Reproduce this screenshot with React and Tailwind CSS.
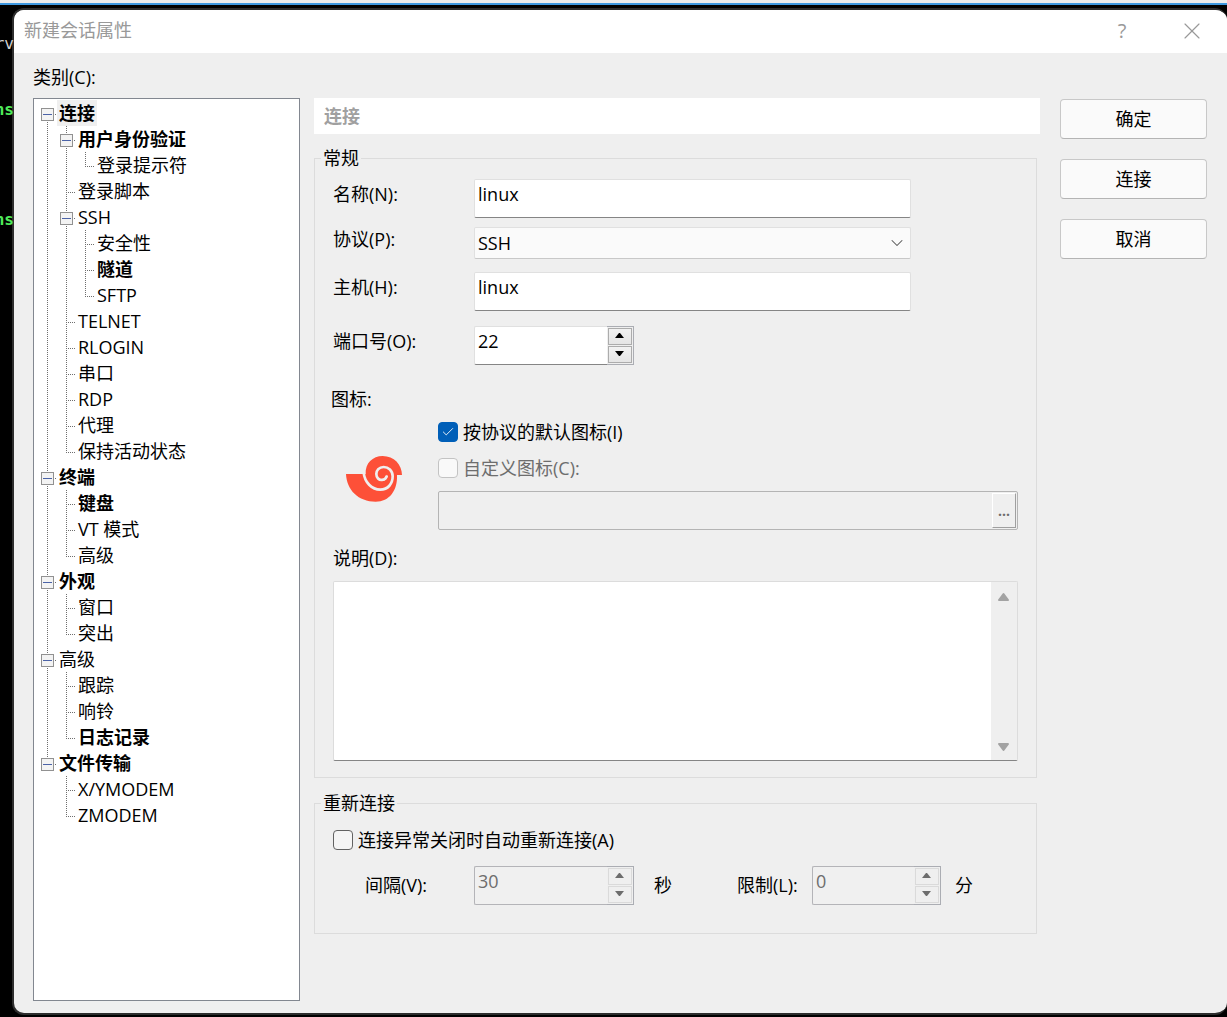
import { useState } from "react";
import { Check, ChevronDown, X } from "lucide-react";
import clsx from "clsx";

// ─── Data ────────────────────────────────────────────────────────────────────
const CATEGORIES = [
  {
    label: "连接",
    bold: true,
    selected: true,
    children: [
      { label: "用户身份验证", bold: true, children: [{ label: "登录提示符" }] },
      { label: "登录脚本" },
      {
        label: "SSH",
        children: [
          { label: "安全性" },
          { label: "隧道", bold: true },
          { label: "SFTP" },
        ],
      },
      { label: "TELNET" },
      { label: "RLOGIN" },
      { label: "串口" },
      { label: "RDP" },
      { label: "代理" },
      { label: "保持活动状态" },
    ],
  },
  {
    label: "终端",
    bold: true,
    children: [
      { label: "键盘", bold: true },
      { label: "VT 模式" },
      { label: "高级" },
    ],
  },
  {
    label: "外观",
    bold: true,
    children: [{ label: "窗口" }, { label: "突出" }],
  },
  {
    label: "高级",
    children: [
      { label: "跟踪" },
      { label: "响铃" },
      { label: "日志记录", bold: true },
    ],
  },
  {
    label: "文件传输",
    bold: true,
    children: [{ label: "X/YMODEM" }, { label: "ZMODEM" }],
  },
];

// ─── Tree ────────────────────────────────────────────────────────────────────
// One 19x26 cell of the dotted guide lines, with the +/- box where a node has children
function Guide({ up, down, across, box, open }) {
  return (
    <svg
      width="19"
      height="26"
      viewBox="0 0 19 26"
      shapeRendering="crispEdges"
      className="block shrink-0"
      aria-hidden="true"
    >
      <g stroke="#6e6e6e" strokeDasharray="1 1" fill="none">
        {up && <path d="M9.5 0V14" />}
        {down && <path d="M9.5 14V26" />}
        {across && <path d="M9 14.5H19" />}
      </g>
      {box && (
        <>
          <rect x="3.5" y="8.5" width="12" height="12" fill="#f3f3f3" stroke="#919191" />
          <path d="M5 14.5H14" stroke="#4b63a7" />
          {!open && <path d="M9.5 10V19" stroke="#4b63a7" />}
        </>
      )}
    </svg>
  );
}

function TreeNode({ node, trail, isFirst, isLast }) {
  const [open, setOpen] = useState(true);
  const isRoot = trail.length === 0;
  const guide = {
    up: !(isRoot && isFirst),
    down: !isLast,
    across: true,
  };

  return (
    <li role="treeitem" aria-expanded={node.children ? open : undefined}>
      <div className="flex h-[26px] items-center">
        {trail.map((line, i) => (
          <Guide key={i} up={line} down={line} />
        ))}
        {node.children ? (
          <button
            type="button"
            aria-label={node.label}
            onClick={() => setOpen(!open)}
          >
            <Guide {...guide} box open={open} />
          </button>
        ) : (
          <Guide {...guide} />
        )}
        <span
          className={clsx(
            "px-0.5 leading-[26px] whitespace-nowrap",
            node.bold && "font-bold",
            node.selected && "bg-[#efefef]",
          )}
        >
          {node.label}
        </span>
      </div>
      {node.children && open && (
        <ul role="group">
          {node.children.map((child, i) => (
            <TreeNode
              key={child.label}
              node={child}
              trail={[...trail, !isLast]}
              isFirst={i === 0}
              isLast={i === node.children.length - 1}
            />
          ))}
        </ul>
      )}
    </li>
  );
}

// ─── Form controls ───────────────────────────────────────────────────────────
function TextRow({ id, label, defaultValue }) {
  return (
    <div className="flex items-start">
      <label htmlFor={id} className="w-[141px] shrink-0 leading-[30px]">
        {label}
      </label>
      <input
        id={id}
        type="text"
        defaultValue={defaultValue}
        className="h-[39px] min-w-0 flex-1 rounded-xs border border-[#e0e0e0] border-b-[#858585] bg-white px-[3px] pb-2.5 outline-none"
      />
    </div>
  );
}

function Arrow({ down }) {
  return (
    <svg width="9" height="5" viewBox="0 0 9 5" fill="currentColor" aria-hidden="true">
      {down ? <path d="M0 0H9L5 5H4Z" /> : <path d="M0 5H9L5 0H4Z" />}
    </svg>
  );
}

function Spinner({ id, defaultValue, disabled, className }) {
  const [value, setValue] = useState(defaultValue);
  const stepClass = clsx(
    "flex flex-1 items-center justify-center border pr-px pb-0.5",
    disabled
      ? "border-[#dadada] text-[#6d6d6d]"
      : "border-[#acacac] bg-linear-to-b from-[#f2f2f2] to-[#e5e5e5] text-black",
  );

  return (
    <div className={clsx("flex h-[39px]", className)}>
      <input
        id={id}
        type="text"
        inputMode="numeric"
        value={value}
        disabled={disabled}
        onChange={(e) => setValue(Number(e.target.value) || 0)}
        className={clsx(
          "min-w-0 flex-1 rounded-l-xs border border-r-0 px-[3px] pb-2 outline-none",
          disabled
            ? "border-[#b4b4b8] bg-[#f0f0f0] text-[#6d6d6d]"
            : "border-[#e0e0e0] border-b-[#858585] bg-white",
        )}
      />
      <div className="flex w-[27px] flex-col gap-px border border-l-0 border-[#abadb3] p-px">
        <button
          type="button"
          aria-label="+"
          disabled={disabled}
          onClick={() => setValue(value + 1)}
          className={stepClass}
        >
          <Arrow />
        </button>
        <button
          type="button"
          aria-label="-"
          disabled={disabled}
          onClick={() => setValue(value - 1)}
          className={stepClass}
        >
          <Arrow down />
        </button>
      </div>
    </div>
  );
}

function CheckRow({ label, defaultChecked, disabled }) {
  return (
    <label
      className={clsx(
        "flex h-5 items-center gap-[5px] whitespace-nowrap",
        disabled && "text-[#6d6d6d]",
      )}
    >
      <span className="grid place-items-center">
        <input
          type="checkbox"
          defaultChecked={defaultChecked}
          disabled={disabled}
          className="peer col-start-1 row-start-1 size-5 appearance-none rounded-sm border border-[#626262] bg-[#f5f5f5] checked:border-[#005fb8] checked:bg-[#005fb8] disabled:border-[#c3c3c3] disabled:bg-[#f9f9f9]"
        />
        <Check
          className="pointer-events-none col-start-1 row-start-1 hidden size-3.5 text-white peer-checked:block"
          strokeWidth={1.5}
        />
      </span>
      {label}
    </label>
  );
}

function Group({ title, className, children }) {
  return (
    <fieldset className={clsx("mr-[3px] min-w-0 border border-[#dcdcdc] px-[18px]", className)}>
      <legend className="-ml-3 px-0.5 leading-6">{title}</legend>
      {children}
    </fieldset>
  );
}

// ─── Shell logo ──────────────────────────────────────────────────────────────
function ShellLogo() {
  return (
    <svg width="58" height="48" viewBox="45 45 174 144" aria-hidden="true">
      <path
        d="M48 102H107C105 70 128 48 158 48C192 48 216 74 216 105H201C203 152 178 185 137 185C85 185 50 150 48 102Z"
        fill="#fd5038"
      />
      {/* gap between the whorls, winding inwards */}
      <path
        d="M101 98C104 127 125 149 151 149C174 149 188 131 188 109C188 92 175 81 161 81C147 81 139 91 139 102C139 113 147 121 156 120C164 119 169 113 170 107"
        fill="none"
        stroke="#efefef"
        strokeWidth="8"
      />
      <path d="M153 116C161 117 167 113 170 104L174 108C172 116 166 122 157 123Z" fill="#efefef" />
    </svg>
  );
}

// ─── Main Component ──────────────────────────────────────────────────────────
export default function App() {
  return (
    <div className="flex min-h-screen flex-col bg-black font-['Open_Sans','Noto_Sans_CJK_SC',sans-serif] text-[18px] text-black">
      <div className="h-[5px] border-b-2 border-[#3e98e0] bg-[#ececec]" />

      <div className="flex flex-1">
        {/* Terminal behind the dialog */}
        <div className="z-10 flex w-3 shrink-0 justify-end pt-7">
          <pre className="-mr-0.5 font-['DejaVu_Sans_Mono',monospace] text-[16px] leading-[22px] font-bold text-[#4fe95a]">
            <span className="font-normal text-[#d0d0d0]">rv</span>
            {"\n\n\nns\n\n\n\n\nns"}
          </pre>
        </div>

        <div
          role="dialog"
          aria-labelledby="dialog-title"
          className="mt-[3px] mb-0.5 flex min-w-0 flex-1 flex-col overflow-hidden rounded-xl border-2 border-r-0 border-[#2d2d2d] bg-[#efefef]"
        >
          {/* Title bar */}
          <div className="flex h-[43px] shrink-0 items-stretch bg-white pb-0.5 pl-2.5 text-[#999999]">
            <h1 id="dialog-title" className="flex-1 leading-10">
              新建会话属性
            </h1>
            <button type="button" aria-label="帮助" className="w-[70px] text-[20px]">
              ?
            </button>
            <button type="button" aria-label="关闭" className="flex w-[70px] items-center justify-center">
              <X className="size-7" strokeWidth={1} />
            </button>
          </div>

          <form className="flex flex-1 flex-col pr-5 pb-3 pl-[19px]" onSubmit={(e) => e.preventDefault()}>
            <p id="category-label" className="h-[45px] leading-[48px]">
              类别(C):
            </p>

            <div className="flex flex-1 items-stretch">
              <ul
                role="tree"
                aria-labelledby="category-label"
                className="w-[267px] shrink-0 border border-[#828790] bg-white pt-px pl-1"
              >
                {CATEGORIES.map((node, i) => (
                  <TreeNode
                    key={node.label}
                    node={node}
                    trail={[]}
                    isFirst={i === 0}
                    isLast={i === CATEGORIES.length - 1}
                  />
                ))}
              </ul>

              <div className="ml-3.5 min-w-0 flex-1">
                <h2 className="h-9 bg-white pl-2.5 leading-9 font-bold text-[#a0a0a0]">连接</h2>

                <Group title="常规" className="mt-3 pb-4">
                  <div className="mt-[9px] mr-[107px]">
                    <TextRow id="name" label="名称(N):" defaultValue="linux" />

                    <div className="mt-[9px] mb-[13px] flex items-start">
                      <label htmlFor="protocol" className="w-[141px] shrink-0 leading-6">
                        协议(P):
                      </label>
                      <div className="relative min-w-0 flex-1">
                        <select
                          id="protocol"
                          className="block h-8 w-full appearance-none rounded-xs border border-[#e0e0e0] border-b-[#c8c8c8] bg-[#fafafa] px-[3px] outline-none"
                        >
                          <option>SSH</option>
                          <option>TELNET</option>
                          <option>RLOGIN</option>
                          <option>SFTP</option>
                        </select>
                        <ChevronDown
                          className="pointer-events-none absolute top-1.5 right-1 size-5 text-[#555555]"
                          strokeWidth={1.25}
                        />
                      </div>
                    </div>

                    <TextRow id="host" label="主机(H):" defaultValue="linux" />
                  </div>

                  <div className="mt-[15px] flex items-start">
                    <label htmlFor="port" className="w-[141px] shrink-0 leading-[30px]">
                      端口号(O):
                    </label>
                    <Spinner id="port" defaultValue={22} className="w-40" />
                  </div>

                  <p className="mt-[22px] -ml-0.5 leading-6">图标:</p>
                  <div className="mt-[11px] flex">
                    <div className="w-[105px] shrink-0 pt-[33px] pl-3">
                      <ShellLogo />
                    </div>
                    <div className="flex min-w-0 flex-1 flex-col">
                      <CheckRow label="按协议的默认图标(I)" defaultChecked />
                      <div className="mt-4">
                        <CheckRow label="自定义图标(C):" disabled />
                      </div>
                      <div className="mt-[13px] flex h-[39px] rounded-xs border border-[#b4b4b4] p-px">
                        <input
                          type="text"
                          aria-label="自定义图标(C)"
                          disabled
                          className="min-w-0 flex-1 bg-transparent px-[3px]"
                        />
                        <button
                          type="button"
                          disabled
                          className="w-6 border border-white border-r-[#9f9f9f] border-b-[#9f9f9f] text-[14px] font-bold text-[#6d6d6d]"
                        >
                          ...
                        </button>
                      </div>
                    </div>
                  </div>

                  <label htmlFor="description" className="mt-4 block leading-6">
                    说明(D):
                  </label>
                  <div className="mt-[11px] flex h-[180px] rounded-xs border border-[#dcdcdc] border-b-[#858585] bg-white">
                    <textarea id="description" className="min-w-0 flex-1 resize-none px-[3px] outline-none" />
                    <div className="flex w-[26px] flex-col items-center justify-between bg-[#efefef] pt-2.5 pb-2 text-[#a3a3a3]">
                      <svg width="14" height="10" viewBox="0 0 14 10" aria-hidden="true">
                        <path d="M6.5 2L11 8H2Z" fill="currentColor" stroke="currentColor" strokeWidth="2" strokeLinejoin="round" />
                      </svg>
                      <svg width="14" height="10" viewBox="0 0 14 10" aria-hidden="true">
                        <path d="M6.5 8L11 2H2Z" fill="currentColor" stroke="currentColor" strokeWidth="2" strokeLinejoin="round" />
                      </svg>
                    </div>
                  </div>
                </Group>

                <Group title="重新连接" className="mt-[13px] pb-7">
                  <div className="mt-[15px]">
                    <CheckRow label="连接异常关闭时自动重新连接(A)" />
                  </div>
                  <div className="mt-4 flex items-center pl-8">
                    <label htmlFor="interval" className="w-[109px] shrink-0">
                      间隔(V):
                    </label>
                    <Spinner id="interval" defaultValue={30} disabled className="w-40" />
                    <span className="ml-5">秒</span>
                    <label htmlFor="limit" className="ml-[65px] w-[75px] shrink-0">
                      限制(L):
                    </label>
                    <Spinner id="limit" defaultValue={0} disabled className="w-[129px]" />
                    <span className="ml-3.5">分</span>
                  </div>
                </Group>
              </div>

              <div className="ml-5 flex w-[147px] shrink-0 flex-col gap-5 pt-px">
                {["确定", "连接", "取消"].map((text) => (
                  <button
                    key={text}
                    type="button"
                    className="h-10 rounded-sm border border-[#c8c8c8] border-b-[#b4b4b4] bg-[#fafafa] hover:bg-[#f5f5f5]"
                  >
                    {text}
                  </button>
                ))}
              </div>
            </div>
          </form>
        </div>
      </div>
    </div>
  );
}
